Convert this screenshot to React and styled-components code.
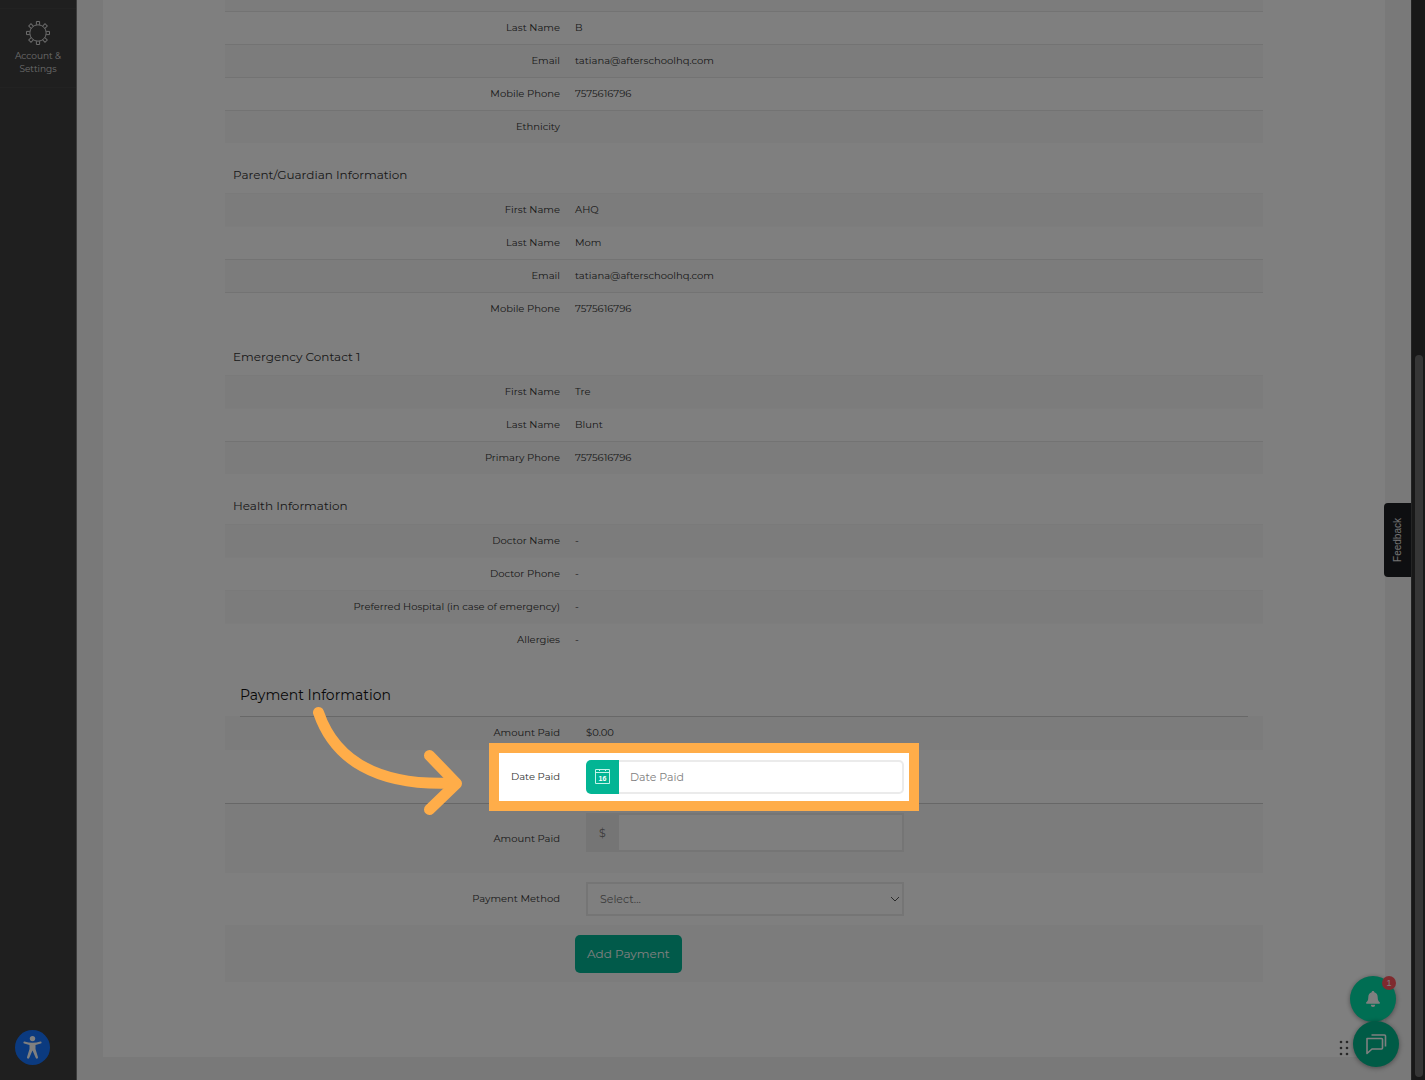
import React from "react";
import styled, { createGlobalStyle } from "styled-components";

const GlobalStyle = createGlobalStyle`
  *, *::before, *::after { box-sizing: border-box; }
  body {
    margin: 0;
    background: #f2f2f2;
    color: #333;
    font-family: Montserrat, Inter, "Liberation Sans", sans-serif;
    font-size: 10px;
    line-height: 16px;
    overflow: hidden;
  }
  button, input, select { font: inherit; }
`;

const Page = styled.div`
  display: flex;
  min-height: 100vh;
  position: relative;
  overflow: hidden;
`;

const Sidebar = styled.nav`
  flex: 0 0 77px;
  display: flex;
  flex-direction: column;
  justify-content: space-between;
  padding: 8px 0 15px;
  background: #3e3e3e;
  border-right: 1px solid #787878;
`;

const SidebarLink = styled.a`
  display: flex;
  flex-direction: column;
  align-items: center;
  gap: 3px;
  padding: 11px 8px 12px;
  border-top: 1px solid #444;
  border-bottom: 1px solid #444;
  color: #d8d8d8;
  font-size: 9px;
  line-height: 13px;
  text-align: center;
  text-decoration: none;
`;

const AccessButton = styled.button`
  width: 35px;
  height: 35px;
  margin-left: 15px;
  padding: 0;
  border: 0;
  border-radius: 50%;
  background: #1674ff;
  display: grid;
  place-items: center;
`;

const Main = styled.main`
  flex: 1;
  min-width: 0;
  padding: 0 26px 23px;
`;

const Card = styled.div`
  background: #fff;
  padding: 0 122px 75px;
`;

const Strip = styled.div`
  height: 11px;
  background: #f9f9f9;
`;

const List = styled.dl`
  margin: 0;
`;

const Row = styled.div`
  display: grid;
  grid-template-columns: 350px 1fr;
  align-items: center;
  min-height: 33px;
  border-top: 1px solid ${(p) => (p.$line ? "#e6e6e6" : p.$striped ? "#f5f5f5" : "#fafafa")};
  background: ${(p) => (p.$striped ? "#f9f9f9" : "#fff")};
`;

const Term = styled.dt`
  padding-right: 15px;
  text-align: right;
`;

const Value = styled.dd`
  margin: 0;
`;

const SectionTitle = styled.h3`
  margin: 0;
  padding: 22px 8px 8px;
  font-size: 12px;
  line-height: 20px;
  font-weight: 400;
`;

const PaymentTitle = styled.h2`
  position: relative;
  z-index: 1;
  margin: 0 15px -1px;
  padding: 27px 0 9px;
  border-bottom: 1px solid #d0d0d0;
  color: #111;
  font-size: 14px;
  line-height: 24px;
  font-weight: 400;
`;

const FormRow = styled.div`
  position: relative;
  display: grid;
  grid-template-columns: 350px 1fr;
  align-items: center;
  min-height: ${(p) => p.$height}px;
  background: ${(p) => (p.$striped ? "#f9f9f9" : "#fff")};
  border-bottom: ${(p) => (p.$line ? "1px solid #cfcfcf" : "0")};
`;

const Label = styled.label`
  padding-right: 15px;
  text-align: right;
`;

const Amount = styled.output`
  margin-left: 11px;
`;

const Field = styled.div`
  display: flex;
  align-self: ${(p) => (p.$top ? "start" : "center")};
  margin: ${(p) => (p.$top ? "9px" : "0")} 0 0 11px;
  max-width: 318px;
  height: ${(p) => (p.$top ? "39px" : "34px")};
  font-size: 11px;
`;

const CalendarButton = styled.button`
  flex: 0 0 33px;
  padding: 0;
  border: 0;
  border-radius: 5px 0 0 5px;
  background: #03b594;
  display: grid;
  place-items: center;
`;

const Prefix = styled.span`
  flex: 0 0 33px;
  display: grid;
  place-items: center;
  background: #ebebeb;
  color: #777;
`;

const TextInput = styled.input`
  flex: 1;
  min-width: 0;
  padding: 0 11px;
  border: 2px solid #ebebeb;
  border-left: 0;
  border-radius: ${(p) => (p.$rounded ? "0 5px 5px 0" : "0")};
  background: #fff;
  color: #666;
  outline: 0;
  &::placeholder { color: #808080; opacity: 1; }
`;

const SelectWrap = styled.div`
  position: relative;
  flex: 1;
  display: flex;
  svg { position: absolute; right: 4px; top: 12px; pointer-events: none; }
`;

const Select = styled.select`
  flex: 1;
  appearance: none;
  padding: 0 12px;
  border: 2px solid #ebebeb;
  border-radius: 0;
  background: #fff;
  color: #777;
`;

const AddButton = styled.button`
  grid-column: 2;
  justify-self: start;
  height: 38px;
  padding: 0 12px;
  border: 0;
  border-radius: 5px;
  background: #03b594;
  color: #fff;
  font-size: 12px;
`;

const Spotlight = styled.div`
  position: absolute;
  z-index: 10;
  left: 264px;
  top: -7px;
  width: 430px;
  height: 68px;
  border: 10px solid #ffad49;
  box-shadow: 0 0 0 3000px rgba(0, 0, 0, 0.5);
  pointer-events: none;
`;

const Arrow = styled.svg`
  position: absolute;
  z-index: 11;
  left: 85px;
  top: -46px;
  pointer-events: none;
`;

const ScrollTrack = styled.div`
  flex: 0 0 14px;
  display: flex;
  flex-direction: column;
  justify-content: flex-end;
  padding: 0 2px 3px 3px;
  background: #303030;
  border-left: 1px solid #484848;
`;

const ScrollThumb = styled.div`
  flex: 0 0 67%;
  border-radius: 4px;
  background: #6c6c6c;
`;

const Feedback = styled.button`
  position: absolute;
  right: 14px;
  top: 503px;
  width: 27px;
  height: 74px;
  padding: 0;
  border: 0;
  border-radius: 4px 0 0 4px;
  background: #1d1f22;
  color: #e4e4e4;
  font-family: "Liberation Sans", Arial, sans-serif;
  font-size: 10px;
  writing-mode: vertical-rl;
  span { display: inline-block; transform: rotate(180deg); }
`;

const Widgets = styled.div`
  position: absolute;
  right: 26px;
  bottom: 13px;
  display: flex;
  align-items: flex-end;
  gap: 4px;
`;

const DragDots = styled.svg`
  margin-bottom: 10px;
`;

const Bubbles = styled.div`
  display: flex;
  flex-direction: column;
`;

const Bubble = styled.button`
  position: relative;
  width: 46px;
  height: 46px;
  margin: ${(p) => (p.$lifted ? "0 3px -1px -3px" : "0")};
  padding: 0;
  border: 0;
  border-radius: 50%;
  background: ${(p) => (p.$lifted ? "#00dca6" : "#00b68c")};
  box-shadow: 0 1px 5px rgba(0, 0, 0, 0.4);
  display: grid;
  place-items: center;
`;

const Badge = styled.span`
  position: absolute;
  top: 0;
  right: 0;
  width: 14px;
  height: 14px;
  border-radius: 50%;
  background: #ff545c;
  color: #fff;
  font-family: "Liberation Sans", Arial, sans-serif;
  font-size: 9px;
  line-height: 14px;
  text-align: center;
`;

const sections = [
  {
    rows: [["Last Name", "B"], ["Email", "tatiana@afterschoolhq.com"], ["Mobile Phone", "7575616796"], ["Ethnicity", ""]],
    stripe: 1,
    lines: [0, 1, 2, 3],
  },
  {
    title: "Parent/Guardian Information",
    rows: [["First Name", "AHQ"], ["Last Name", "Mom"], ["Email", "tatiana@afterschoolhq.com"], ["Mobile Phone", "7575616796"]],
    stripe: 0,
    lines: [2, 3],
  },
  {
    title: "Emergency Contact 1",
    rows: [["First Name", "Tre"], ["Last Name", "Blunt"], ["Primary Phone", "7575616796"]],
    stripe: 0,
    lines: [2],
  },
  {
    title: "Health Information",
    rows: [["Doctor Name", "-"], ["Doctor Phone", "-"], ["Preferred Hospital (in case of emergency)", "-"], ["Allergies", "-"]],
    stripe: 0,
    lines: [],
  },
];

function GearIcon() {
  const teeth = [0, 45, 90, 135, 180, 225, 270, 315];
  return (
    <svg width="26" height="26" viewBox="0 0 26 26" fill="none" stroke="#d8d8d8" strokeWidth="1">
      <circle cx="13" cy="13" r="8.2" />
      {teeth.map((a) => (
        <path key={a} d="M11.4 4.8V1.5h3.2v3.3" transform={`rotate(${a} 13 13)`} />
      ))}
    </svg>
  );
}

function AccessIcon() {
  return (
    <svg width="19" height="25" viewBox="0 0 19 25" fill="#fff">
      <circle cx="9.5" cy="3.6" r="2.7" />
      <path d="M1.5 6.6 Q9.5 9 17.5 6.6 Q18.5 6.5 18.6 7.4 Q18.6 8.2 17.8 8.5 L12.5 10.1 V14 L15 22.2 Q15.1 23.3 14.2 23.6 Q13.2 23.8 12.8 22.9 L9.5 15.5 L6.2 22.9 Q5.8 23.8 4.8 23.6 Q3.9 23.3 4 22.2 L6.5 14 V10.1 L1.2 8.5 Q.4 8.2 .4 7.4 Q.5 6.5 1.5 6.6Z" />
    </svg>
  );
}

function CalendarIcon() {
  return (
    <svg width="17" height="17" viewBox="0 0 17 17" fill="none" stroke="#c4f3e9" strokeWidth="1">
      <path d="M1.5 1.5h14v14h-14zM1.5 4.5h14M5.5 1v2M11.5 1v2" />
      <text x="8.5" y="12.5" textAnchor="middle" fontFamily="Liberation Sans, sans-serif" fontSize="7" fontWeight="700" fill="#fff" stroke="none">16</text>
    </svg>
  );
}

export default function App() {
  return (
    <>
      <GlobalStyle />
      <Page>
        <Sidebar>
          <SidebarLink href="#settings">
            <GearIcon />
            <span>Account &amp; Settings</span>
          </SidebarLink>
          <AccessButton aria-label="Accessibility options">
            <AccessIcon />
          </AccessButton>
        </Sidebar>

        <Main>
          <Card>
            <Strip />
            {sections.map((s, n) => (
              <section key={n}>
                {s.title && <SectionTitle>{s.title}</SectionTitle>}
                <List>
                  {s.rows.map(([term, value], i) => (
                    <Row key={term} $striped={i % 2 === s.stripe} $line={s.lines.includes(i)}>
                      <Term>{term}</Term>
                      <Value>{value}</Value>
                    </Row>
                  ))}
                </List>
              </section>
            ))}

            <PaymentTitle>Payment Information</PaymentTitle>
            <FormRow $height={34} $striped>
              <Label htmlFor="paid-total">Amount Paid</Label>
              <Amount id="paid-total">$0.00</Amount>
            </FormRow>
            <FormRow $height={54} $line>
              <Label htmlFor="date-paid">Date Paid</Label>
              <Field>
                <CalendarButton type="button" aria-label="Choose date">
                  <CalendarIcon />
                </CalendarButton>
                <TextInput id="date-paid" placeholder="Date Paid" $rounded />
              </Field>
              <Spotlight />
              <Arrow width="160" height="120" viewBox="310 704 160 120" fill="none" stroke="#ffad49" strokeWidth="11" strokeLinecap="round" strokeLinejoin="round">
                <path d="M318.5 712.5C334 758 375 787 455 783" />
                <path d="M429.5 755.5L456.5 783.5L429.5 809.5" />
              </Arrow>
            </FormRow>
            <FormRow $height={69} $striped>
              <Label htmlFor="amount-paid">Amount Paid</Label>
              <Field $top>
                <Prefix>$</Prefix>
                <TextInput id="amount-paid" />
              </Field>
            </FormRow>
            <FormRow $height={52}>
              <Label htmlFor="method">Payment Method</Label>
              <Field>
                <SelectWrap>
                  <Select id="method" defaultValue="">
                    <option value="">Select...</option>
                  </Select>
                  <svg width="10" height="10" viewBox="0 0 10 10" fill="none" stroke="#555" strokeWidth="1">
                    <path d="M1 3l4 4 4-4" />
                  </svg>
                </SelectWrap>
              </Field>
            </FormRow>
            <FormRow $height={57} $striped>
              <AddButton type="button">Add Payment</AddButton>
            </FormRow>
          </Card>
        </Main>

        <ScrollTrack>
          <ScrollThumb />
        </ScrollTrack>

        <Feedback type="button"><span>Feedback</span></Feedback>

        <Widgets>
          <DragDots width="10" height="17" viewBox="0 0 10 17" fill="#505050">
            {[2, 8, 14].map((y) => (
              <g key={y}>
                <circle cx="2" cy={y} r="1.3" />
                <circle cx="8" cy={y} r="1.3" />
              </g>
            ))}
          </DragDots>
          <Bubbles>
            <Bubble $lifted aria-label="Notifications">
              <svg width="16" height="18" viewBox="0 0 16 18" fill="#fff">
                <path d="M8 1c.8 0 1.3.5 1.3 1.2C11.6 2.8 12.7 4.8 12.7 7.2c0 3 .8 4.2 2 5.1.5.5.3 1.5-.5 1.5H1.8c-.8 0-1-1-.5-1.5 1.2-.9 2-2.1 2-5.1 0-2.4 1.1-4.4 3.4-5C6.7 1.5 7.2 1 8 1zM5.8 14.8h4.4a2.2 2.2 0 0 1-4.4 0z" />
              </svg>
              <Badge>1</Badge>
            </Bubble>
            <Bubble aria-label="Chat">
              <svg width="24" height="24" viewBox="0 0 24 24" fill="none" stroke="#fff" strokeWidth="1.6" strokeLinejoin="round">
                <path d="M3 6.5h14.5q1 0 1 1v8.5q0 1-1 1H8l-5 4.5z" />
                <path d="M7.5 3h13q1 0 1 1v10.5" />
              </svg>
            </Bubble>
          </Bubbles>
        </Widgets>
      </Page>
    </>
  );
}
